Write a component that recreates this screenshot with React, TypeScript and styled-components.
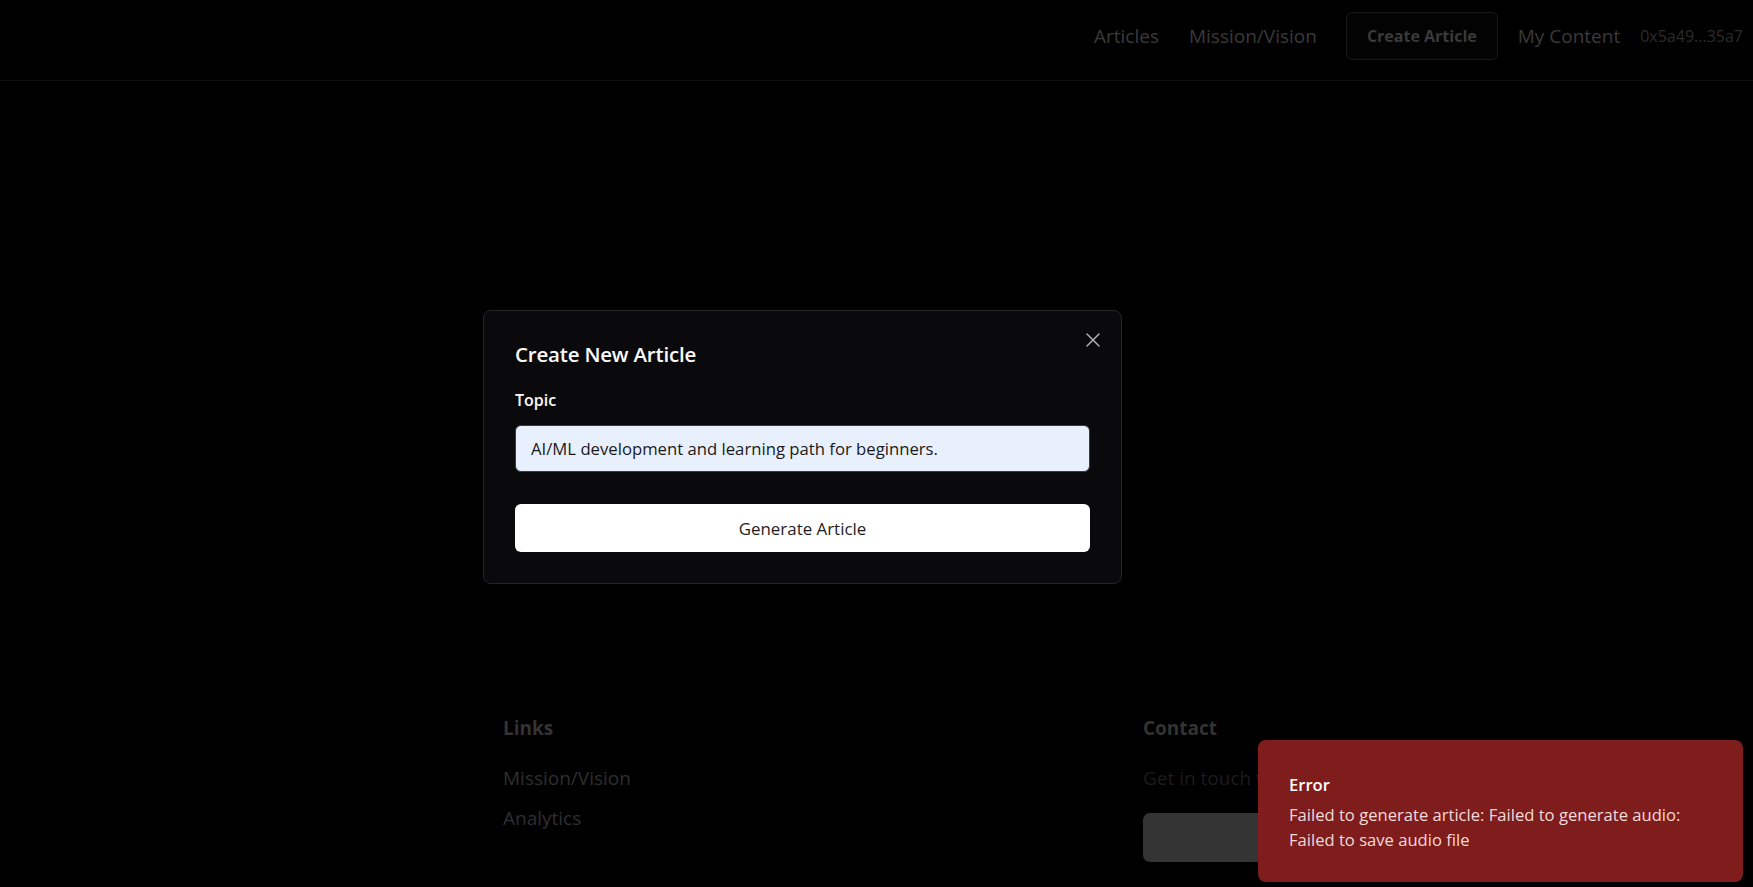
import React from "react";
import styled, { createGlobalStyle } from "styled-components";

const Global = createGlobalStyle`
  html, body { margin: 0; padding: 0; background: #000; }
  body { font-family: "Open Sans", "Noto Sans", sans-serif; color: #fff; }
  * { box-sizing: border-box; }
`;

const Page = styled.div`
  width: 1753px;
  height: 887px;
  overflow: hidden;
  background: #000;
  display: flex;
  flex-direction: column;
`;

const Header = styled.header`
  height: 81px;
  border-bottom: 1px solid #101010;
  display: flex;
  align-items: flex-start;
  justify-content: flex-end;
  padding: 12px 10px 0 0;
`;

const Nav = styled.nav`
  display: flex;
  align-items: center;
  height: 48px;
`;

const NavLink = styled.a<{ $gap: number }>`
  font-size: 19px;
  color: #3a3a3a;
  text-decoration: none;
  margin-left: ${(p) => p.$gap}px;
`;

const NavButton = styled.button`
  margin-left: 29px;
  height: 48px;
  padding: 0 20px;
  background: #030303;
  border: 1px solid #181818;
  border-radius: 6px;
  color: #3a3a3a;
  font-family: inherit;
  font-size: 16px;
  font-weight: 700;
`;

const Address = styled.span`
  margin-left: 20px;
  font-size: 16px;
  color: #2c2c2c;
`;

const Main = styled.main`
  flex: 1;
`;

const Footer = styled.footer`
  display: grid;
  grid-template-columns: 640px 320px;
  padding: 0 0 0 503px;
  height: 173px;
`;

const FooterCol = styled.div`
  display: flex;
  flex-direction: column;
`;

const FooterHeading = styled.h3`
  margin: 0 0 22px;
  font-size: 19px;
  font-weight: 700;
  line-height: 28px;
  color: #333;
`;

const FooterLink = styled.a`
  font-size: 19px;
  line-height: 28px;
  color: #2f2f2f;
  margin-bottom: 12px;
`;

const FooterText = styled.p`
  margin: 0 0 21px;
  font-size: 19px;
  line-height: 28px;
  color: #1c1c1c;
`;

const FooterButton = styled.div`
  width: 320px;
  height: 49px;
  border-radius: 7px;
  background: #343434;
`;

const Overlay = styled.div`
  position: fixed;
  inset: 0;
`;

const Modal = styled.div`
  position: absolute;
  left: 483px;
  top: 310px;
  width: 639px;
  padding: 29px 31px 31px;
  background: #0a0a0c;
  border: 1px solid #26262a;
  border-radius: 8px;
  display: flex;
  flex-direction: column;
`;

const CloseButton = styled.button`
  position: absolute;
  right: 16px;
  top: 17px;
  width: 24px;
  height: 24px;
  padding: 0;
  background: none;
  border: none;
  color: #b4b4b8;
  display: flex;
  align-items: center;
  justify-content: center;
`;

const Title = styled.h2`
  margin: 0 0 20px;
  font-size: 20.5px;
  font-weight: 600;
  line-height: 28px;
  color: #fafafa;
  letter-spacing: -0.2px;
`;

const Label = styled.label`
  font-size: 16px;
  font-weight: 600;
  line-height: 24px;
  color: #fafafa;
  margin-bottom: 13px;
`;

const Input = styled.input`
  height: 47px;
  border-radius: 6px;
  border: 1px solid #3a3a40;
  background: #e8f0fe;
  color: #1a1a1a;
  font-family: inherit;
  font-size: 16.7px;
  padding: 0 15px;
  margin-bottom: 32px;
  outline: none;
`;

const PrimaryButton = styled.button`
  height: 48px;
  border-radius: 6px;
  border: none;
  background: #fff;
  color: #1e1e22;
  font-family: inherit;
  font-size: 16.9px;
  font-weight: 500;
`;

const Toast = styled.div`
  position: fixed;
  left: 1258px;
  top: 740px;
  width: 485px;
  height: 142px;
  background: #7f1d1d;
  border-radius: 8px;
  padding: 34px 31px 0;
  display: flex;
  flex-direction: column;
  gap: 6px;
`;

const ToastTitle = styled.div`
  font-size: 16.6px;
  font-weight: 600;
  line-height: 22px;
  color: #fff;
`;

const ToastText = styled.div`
  font-size: 16.6px;
  line-height: 25px;
  color: #f1dada;
`;

export default function App() {
  return (
    <>
      <Global />
      <Page>
        <Header>
          <Nav>
            <NavLink $gap={0}>Articles</NavLink>
            <NavLink $gap={30}>Mission/Vision</NavLink>
            <NavButton>Create Article</NavButton>
            <NavLink $gap={20}>My Content</NavLink>
            <Address>0x5a49...35a7</Address>
          </Nav>
        </Header>
        <Main />
        <Footer>
          <FooterCol>
            <FooterHeading>Links</FooterHeading>
            <FooterLink>Mission/Vision</FooterLink>
            <FooterLink>Analytics</FooterLink>
          </FooterCol>
          <FooterCol>
            <FooterHeading>Contact</FooterHeading>
            <FooterText>Get in touch with us</FooterText>
            <FooterButton />
          </FooterCol>
        </Footer>
      </Page>
      <Overlay>
        <Modal>
          <CloseButton aria-label="Close">
            <svg width="24" height="24" viewBox="0 0 24 24" fill="none" stroke="currentColor" strokeWidth="1.4" strokeLinecap="round">
              <path d="M18 6 6 18" />
              <path d="m6 6 12 12" />
            </svg>
          </CloseButton>
          <Title>Create New Article</Title>
          <Label>Topic</Label>
          <Input defaultValue="AI/ML development and learning path for beginners." />
          <PrimaryButton>Generate Article</PrimaryButton>
        </Modal>
      </Overlay>
      <Toast>
        <ToastTitle>Error</ToastTitle>
        <ToastText>
          Failed to generate article: Failed to generate audio: Failed to save audio file
        </ToastText>
      </Toast>
    </>
  );
}
